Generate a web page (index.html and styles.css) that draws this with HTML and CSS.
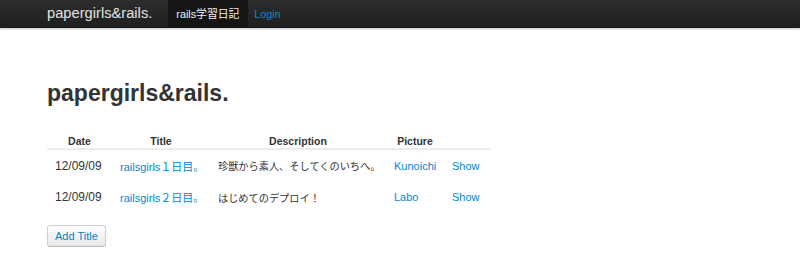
FILE: index.html
```html
<!DOCTYPE html>
<html lang="ja">
<head>
<meta charset="utf-8">
<title>papergirls&amp;rails.</title>
<link rel="stylesheet" href="styles.css">
</head>
<body>
<div class="navbar">
  <div class="navbar-inner">
    <a class="brand" href="#">papergirls&amp;rails.</a>
    <ul class="nav">
      <li class="active"><a href="#">rails学習日記</a></li>
      <li><a href="#">Login</a></li>
    </ul>
  </div>
</div>
<div class="container">
  <h1>papergirls&amp;rails.</h1>
  <table class="table">
    <thead>
      <tr>
        <th class="c-date">Date</th>
        <th class="c-title">Title</th>
        <th class="c-desc">Description</th>
        <th class="c-pic">Picture</th>
        <th class="c-show"></th>
      </tr>
    </thead>
    <tbody>
      <tr>
        <td class="date">12/09/09</td>
        <td><a href="#">railsgirls１日目。</a></td>
        <td class="desc">珍獣から素人、そしてくのいちへ。</td>
        <td><a href="#">Kunoichi</a></td>
        <td><a href="#">Show</a></td>
      </tr>
      <tr>
        <td class="date">12/09/09</td>
        <td><a href="#">railsgirls２日目。</a></td>
        <td class="desc">はじめてのデプロイ！</td>
        <td><a href="#">Labo</a></td>
        <td><a href="#">Show</a></td>
      </tr>
    </tbody>
  </table>
  <a class="btn" href="#">Add Title</a>
</div>
</body>
</html>
```
FILE: styles.css
```css
* { box-sizing: border-box; }
html, body { margin: 0; padding: 0; background: #fff; }
body {
  font-family: "Liberation Sans", "Noto Sans CJK JP", sans-serif;
  color: #333;
}
a { text-decoration: none; color: #0088cc; }

.navbar {
  height: 28px;
  background: linear-gradient(to bottom, #2d2d2d, #1e1e1e);
  box-shadow: 0 1px 2px rgba(0, 0, 0, 0.25);
}
.navbar-inner {
  display: flex;
  align-items: stretch;
  height: 28px;
  padding-left: 47px;
}
.brand {
  color: #e2e2e2;
  font-size: 14.7px;
  line-height: 26px;
  margin-right: 16px;
}
.nav {
  display: flex;
  list-style: none;
  margin: 0;
  padding: 0;
}
.nav li a {
  display: block;
  height: 28px;
  line-height: 28px;
  font-size: 10.8px;
  padding: 0 7px 0 6px;
  color: #0a8ad2;
}
.nav li.active a {
  background: #151515;
  color: #f0f0f0;
  padding: 0 9px 0 8px;
}

.container { padding-left: 47px; }

h1 {
  margin: 52px 0 0;
  font-size: 23px;
  line-height: 27px;
  font-weight: bold;
  color: #333;
}

.table {
  margin-top: 28px;
  border-collapse: collapse;
  table-layout: fixed;
  width: 443px;
}
.table th {
  height: 12px;
  line-height: 12px;
  padding: 0 0 1px;
  font-size: 10.5px;
  font-weight: bold;
  text-align: center;
  border-bottom: 2px solid #ececec;
}
.c-date { width: 65px; }
.c-title { width: 98px; }
.c-desc { width: 176px; }
.c-pic { width: 58px; }
.c-show { width: 46px; }

.table td {
  height: 32px;
  padding: 0 0 0 8px;
  font-size: 11px;
  vertical-align: middle;
  white-space: nowrap;
}
.table td.date { font-size: 12px; }
.table td.desc { font-size: 10.2px; }

.btn {
  display: inline-block;
  margin-top: 12px;
  height: 22px;
  line-height: 20px;
  padding: 0 7px;
  font-size: 11px;
  color: #0088cc;
  border: 1px solid #cfcfcf;
  border-bottom-color: #b8b8b8;
  border-radius: 3px;
  background: linear-gradient(to bottom, #ffffff, #e8e8e8);
  box-shadow: 0 1px 1px rgba(0, 0, 0, 0.06);
}
```
